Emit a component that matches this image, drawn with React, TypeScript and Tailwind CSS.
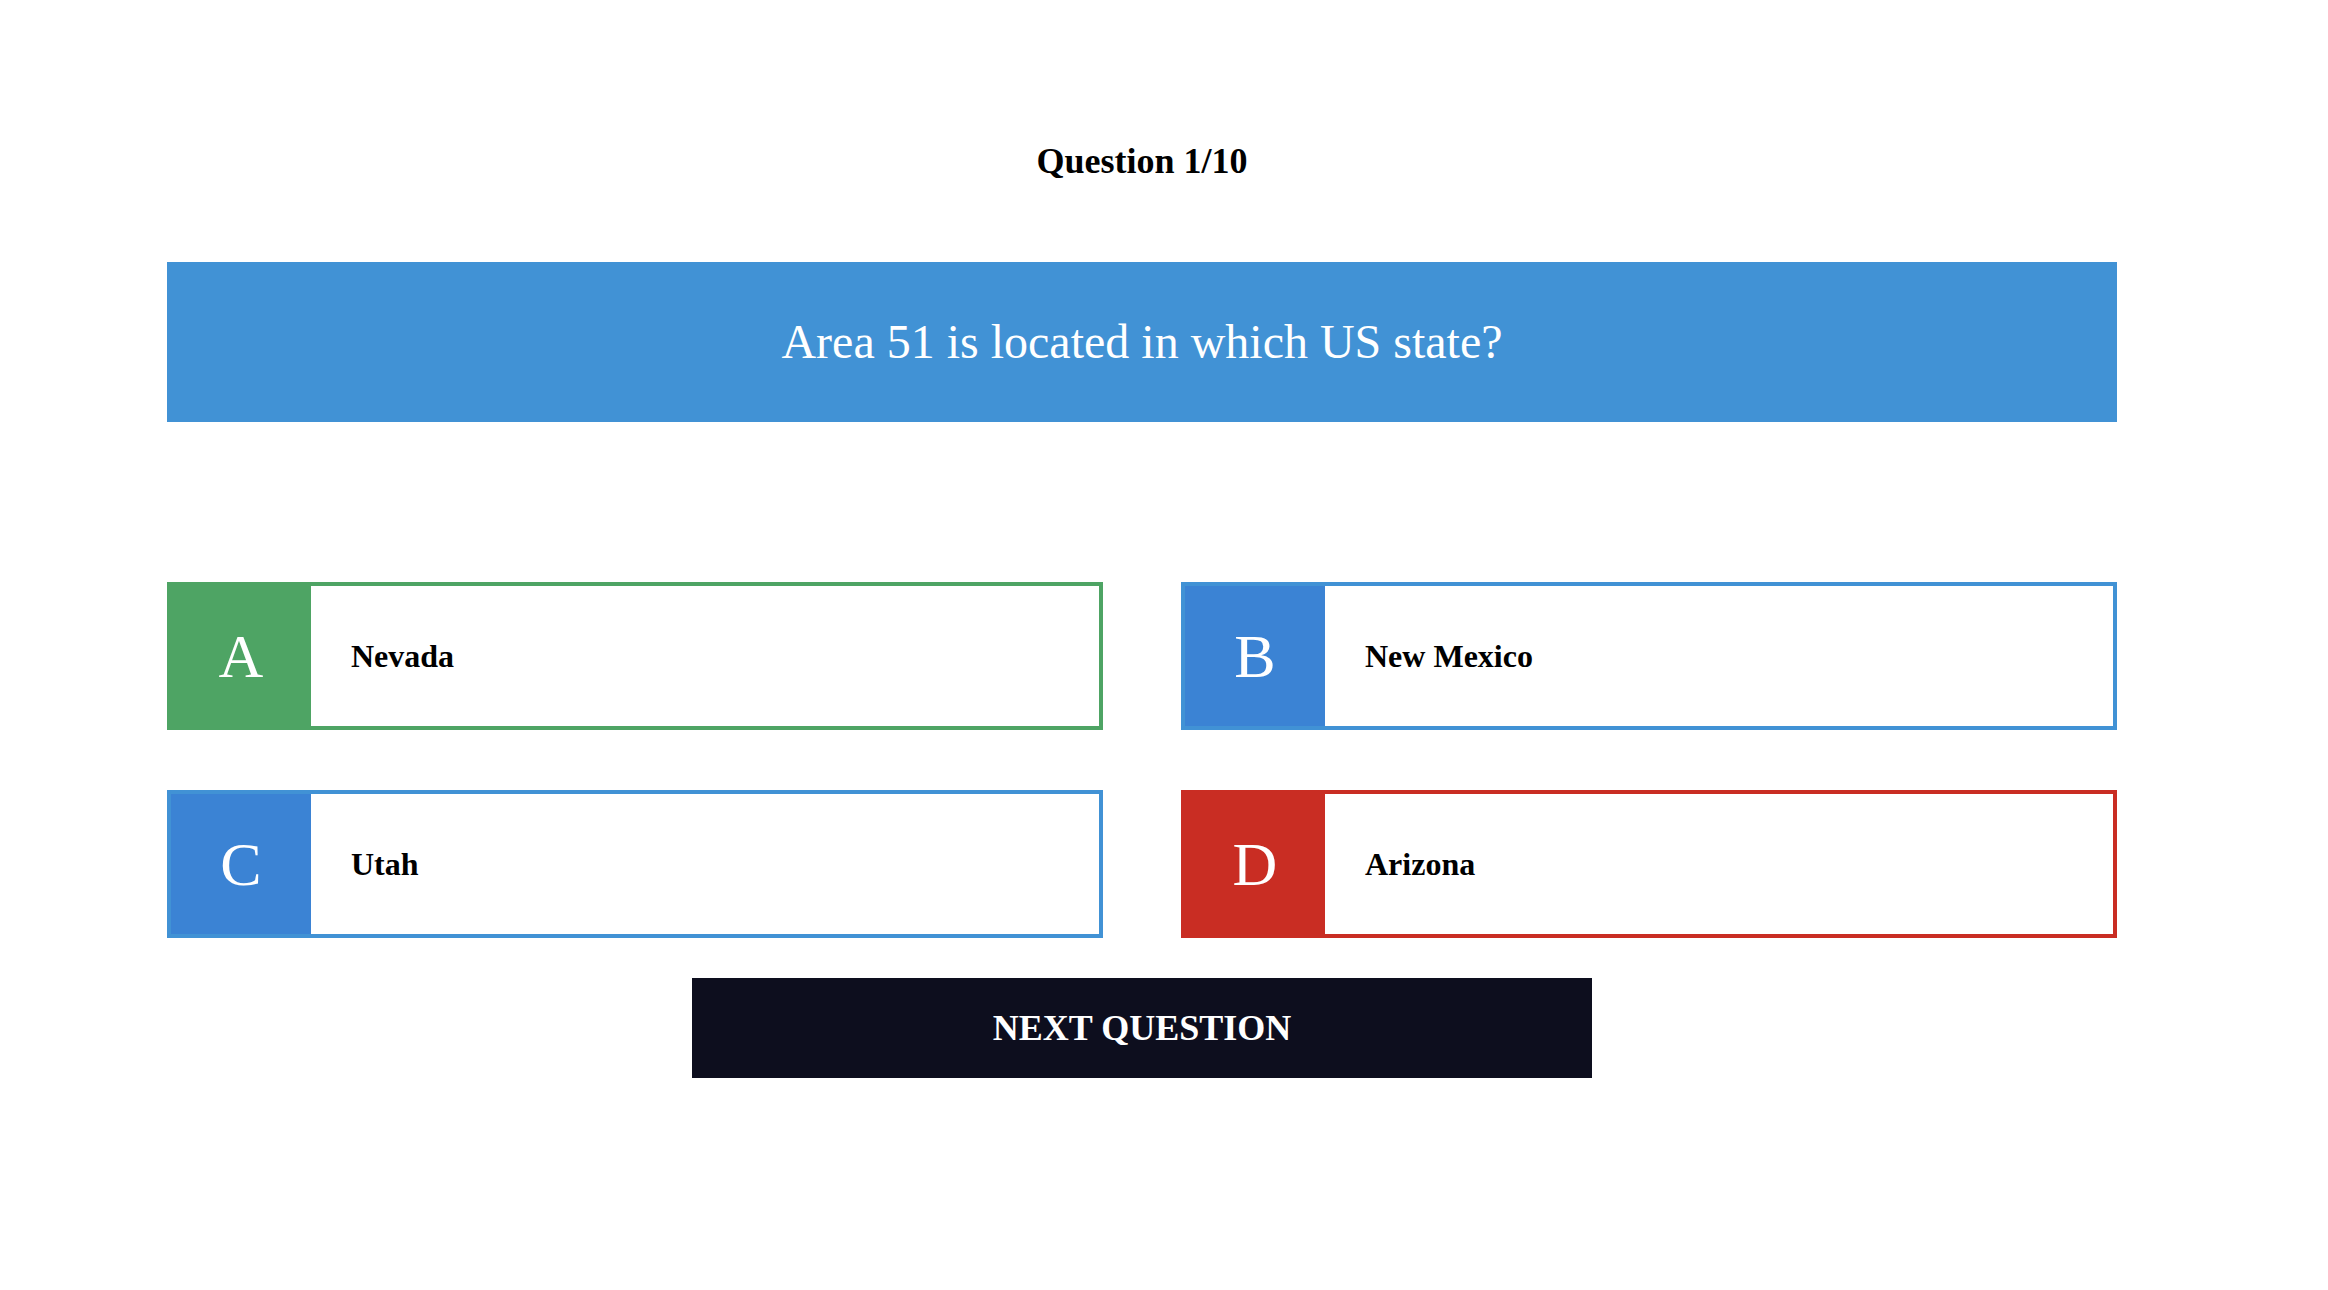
import React from "react";

type Answer = { letter: string; text: string; box: string; border: string };

const answers: Answer[] = [
  { letter: "A", text: "Nevada", box: "bg-[#4ea464]", border: "border-[#4ea464]" },
  { letter: "B", text: "New Mexico", box: "bg-[#3b83d4]", border: "border-[#4192d5]" },
  { letter: "C", text: "Utah", box: "bg-[#3b83d4]", border: "border-[#4192d5]" },
  { letter: "D", text: "Arizona", box: "bg-[#c92d23]", border: "border-[#c92d23]" },
];

export default function App() {
  return (
    <div className="min-h-screen w-full bg-white font-['Liberation_Serif','Times_New_Roman',serif] text-black">
      <div className="ml-[167px] flex w-[1950px] flex-col pt-[143px]">
        <h1 className="text-center text-[36px] font-bold leading-[36px]">Question 1/10</h1>
        <div className="mt-[83px] flex h-[160px] items-center justify-center bg-[#4192d5]">
          <p className="text-[48px] leading-none text-white">Area 51 is located in which US state?</p>
        </div>
        <div className="mt-[160px] grid grid-cols-2 gap-x-[78px] gap-y-[60px]">
          {answers.map((a) => (
            <div key={a.letter} className={`flex h-[148px] border-4 bg-white ${a.border}`}>
              <div className={`flex h-full w-[140px] shrink-0 items-center justify-center ${a.box}`}>
                <span className="text-[62px] leading-none text-white">{a.letter}</span>
              </div>
              <div className="flex items-center pl-10">
                <span className="text-[32px] font-bold leading-none">{a.text}</span>
              </div>
            </div>
          ))}
        </div>
        <div className="mt-10 flex justify-center">
          <button className="flex h-[100px] w-[900px] items-center justify-center bg-[#0d0e1e] text-[36px] font-bold leading-none text-white">
            NEXT QUESTION
          </button>
        </div>
      </div>
    </div>
  );
}
